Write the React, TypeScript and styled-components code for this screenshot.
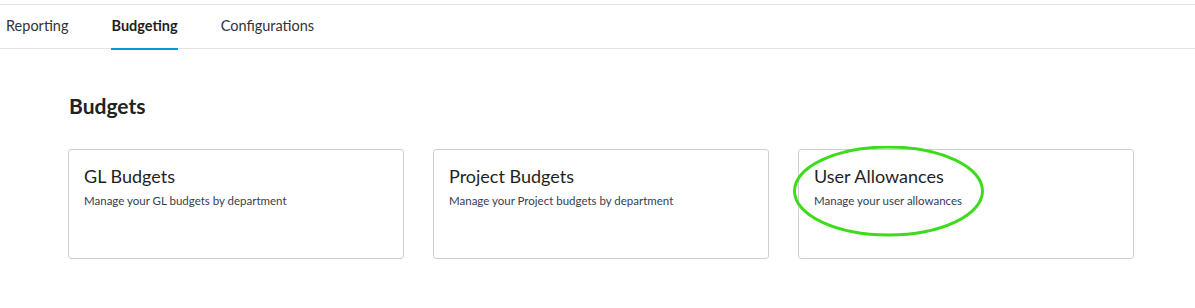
import React from 'react';
import styled, { createGlobalStyle } from 'styled-components';

const GlobalStyle = createGlobalStyle`
  body {
    margin: 0;
    background: #fff;
    font-family: Lato, "Open Sans", sans-serif;
    color: #222;
  }
`;

const Page = styled.div`
  padding-top: 4px;
  width: 1195px;
`;

const TabBar = styled.nav`
  display: flex;
  gap: 43px;
  height: 43px;
  padding-left: 6px;
  border-top: 1px solid #e3e3e3;
  border-bottom: 1px solid #e3e3e3;
`;

const Tab = styled.div<{ $active?: boolean }>`
  display: flex;
  align-items: center;
  padding-bottom: 3px;
  font-size: 14.5px;
  font-weight: ${(p) => (p.$active ? 700 : 400)};
  color: ${(p) => (p.$active ? '#1f1f1f' : '#333')};
  border-bottom: 2px solid ${(p) => (p.$active ? '#0a96dd' : 'transparent')};
  box-sizing: border-box;
  height: 45px;
  margin-bottom: -1px;
`;

const Content = styled.main`
  padding: 43px 0 0 68px;
`;

const Heading = styled.h2`
  margin: 0 0 29px 1px;
  font-size: 21px;
  line-height: 28px;
  font-weight: 700;
  color: #222;
`;

const CardGrid = styled.div`
  display: grid;
  grid-template-columns: repeat(3, 336px);
  gap: 29px;
`;

const Card = styled.div`
  position: relative;
  height: 110px;
  box-sizing: border-box;
  padding: 14px 15px;
  border: 1px solid #cfcfcf;
  border-radius: 3px;
  background: #fff;
`;

const CardTitle = styled.div`
  font-size: 18px;
  line-height: 24px;
  color: #1f1f1f;
`;

const CardText = styled.div`
  margin-top: 6px;
  font-size: 11.5px;
  line-height: 14px;
  color: #34414f;
`;

const Highlight = styled.svg`
  position: absolute;
  left: -6px;
  top: -4px;
  pointer-events: none;
`;

const cards = [
  { title: 'GL Budgets', text: 'Manage your GL budgets by department' },
  { title: 'Project Budgets', text: 'Manage your Project budgets by department' },
  { title: 'User Allowances', text: 'Manage your user allowances', marked: true },
];

export default function App() {
  return (
    <Page>
      <GlobalStyle />
      <TabBar>
        <Tab>Reporting</Tab>
        <Tab $active>Budgeting</Tab>
        <Tab>Configurations</Tab>
      </TabBar>
      <Content>
        <Heading>Budgets</Heading>
        <CardGrid>
          {cards.map((c) => (
            <Card key={c.title}>
              <CardTitle>{c.title}</CardTitle>
              <CardText>{c.text}</CardText>
              {c.marked && (
                <Highlight width="200" height="96" viewBox="0 0 200 96">
                  <ellipse cx="95.5" cy="45" rx="94" ry="44" fill="none" stroke="#3ddc1a" strokeWidth="3" />
                </Highlight>
              )}
            </Card>
          ))}
        </CardGrid>
      </Content>
    </Page>
  );
}
